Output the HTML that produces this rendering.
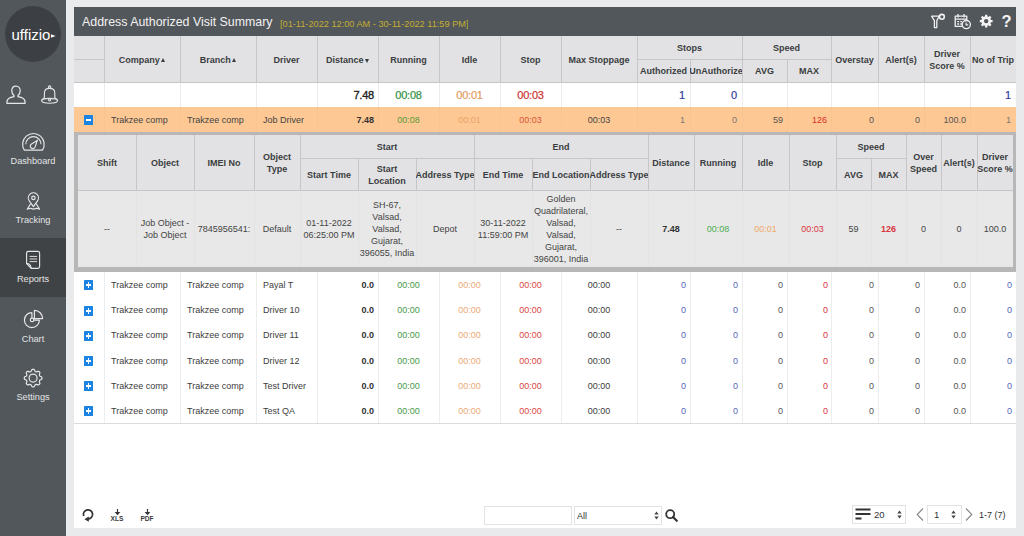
<!DOCTYPE html><html><head><meta charset="utf-8"><style>
html,body{margin:0;padding:0;}
body{width:1024px;height:536px;overflow:hidden;position:relative;background:#e9eaeb;font-family:"Liberation Sans", sans-serif;}
.c{position:absolute;display:flex;align-items:center;box-sizing:border-box;white-space:nowrap;overflow:hidden;}
.hd{font-weight:bold;font-size:9px;color:#3a3d40;}
.td{font-size:9px;color:#3f3f3f;}
svg{position:absolute;}

</style></head><body>
<div style="position:absolute;left:0px;top:0px;width:66px;height:536px;background:#52575c"></div>
<div style="position:absolute;left:0px;top:238px;width:66px;height:59px;background:#3f4346"></div>
<div style="position:absolute;left:5px;top:6px;width:56px;height:56px;background:#3c4044;border-radius:50%"></div>
<div style="position:absolute;left:11.5px;top:27px;line-height:15px;color:#fff;font-size:15px;white-space:nowrap">uffizio</div>
<svg style="left:50.5px;top:33px" width="5" height="6" viewBox="0 0 5 6"><path d="M0 1.2L4.6 3 0 4.8z" fill="#fff"/></svg>
<svg style="left:5.5px;top:84.5px" width="20" height="20" viewBox="0 0 20 20"><path fill="none" stroke="#e6e6e6" stroke-width="1.25" d="M10 1C7.5 1 5.8 3 5.8 5.7C5.8 7.9 6.8 9.6 8 10.6V11.7C4.6 12.3 1.2 13.6 1 16.4V18.3H19V16.4C18.8 13.6 15.4 12.3 12 11.7V10.6C13.2 9.6 14.2 7.9 14.2 5.7C14.2 3 12.5 1 10 1Z"/></svg>
<svg style="left:38px;top:82px" width="24" height="24" viewBox="38 82 24 24"><g fill="none" stroke="#e2e2e2" stroke-width="1.15"><circle cx="49.6" cy="87" r="1.2"/><path d="M44.4 97.6V93C44.4 90.2 46.6 88.3 49.6 88.3S54.8 90.2 54.8 93V97.6C55.2 98.4 56.6 99 57.4 100.2M44.4 97.6C44 98.4 42.6 99 41.8 100.2"/><ellipse cx="49.6" cy="100.8" rx="8" ry="2.4"/><circle cx="49.6" cy="99.8" r="1.1"/></g></svg>
<svg style="left:18px;top:128px" width="30" height="26" viewBox="18 128 30 26"><g fill="none" stroke="#e6e6e6" stroke-width="1.2"><path d="M24.35 150.2A10.8 10.8 0 1 1 42.45 150.2Z"/><path d="M25.8 144.3A7.6 7.6 0 0 1 41 144.3"/><path d="M37.2 140.6L31.53 143.95A2.5 2.5 0 1 0 35.18 146.87Z"/></g></svg>
<div class="c" style="left:0;top:155px;width:66px;height:12px;justify-content:center;color:#e4e4e4;font-size:9.2px;">Dashboard</div>
<svg style="left:22px;top:188px" width="24" height="26" viewBox="22 188 24 26"><g fill="none" stroke="#e6e6e6" stroke-width="1.2" stroke-linejoin="round"><path d="M33.4 206.6L37.53 200.89A5.1 5.1 0 1 0 29.27 200.89Z"/><circle cx="33.4" cy="197.9" r="1.7"/><path d="M30.6 203.8L27.2 209.2Q30.3 207.6 33.4 209.2Q36.5 207.6 39.6 209.2L36.2 203.8"/></g></svg>
<div class="c" style="left:0;top:214px;width:66px;height:12px;justify-content:center;color:#e4e4e4;font-size:9.2px;">Tracking</div>
<svg style="left:20px;top:246px" width="26" height="26" viewBox="20 246 26 26"><g fill="none" stroke="#e6e6e6" stroke-width="1.15" stroke-linejoin="round"><path d="M28.3 251.4H37.8Q39.6 251.4 39.6 253.2V266.5Q39.6 268.3 37.8 268.3H31.2L26.6 263.7V253.2Q26.6 251.4 28.3 251.4Z"/><path d="M26.6 263.7Q28.2 263.4 29.4 264.2Q30.8 265.3 31.2 268.3"/><path d="M29.6 256.4H37.1M29.6 259H37.1M29.6 261.6H37.1" stroke-width="0.95"/></g></svg>
<div class="c" style="left:0;top:273px;width:66px;height:12px;justify-content:center;color:#e4e4e4;font-size:9.2px;">Reports</div>
<svg style="left:20px;top:306px" width="28" height="26" viewBox="20 306 28 26"><g fill="none" stroke="#e6e6e6" stroke-width="1.2" stroke-linejoin="round"><path d="M31.9 312.6A7.5 7.5 0 1 0 39.4 320.1H33.9M31.9 312.6V318.1"/><circle cx="32.1" cy="319.9" r="1.8"/><path d="M34.4 310.3V318.6H42.6A8.3 8.3 0 0 0 34.4 310.3Z"/></g></svg>
<div class="c" style="left:0;top:333px;width:66px;height:12px;justify-content:center;color:#e4e4e4;font-size:9.2px;">Chart</div>
<svg style="left:20px;top:364px" width="26" height="26" viewBox="20 364 26 26"><g fill="none" stroke="#e6e6e6" stroke-width="1.2" stroke-linejoin="round"><path d="M41.95 378.10L41.91 378.56L41.77 379.01L41.37 379.41L40.66 379.71L40.07 379.97L39.77 380.27L39.59 380.59L39.45 380.93L39.35 381.28L39.35 381.71L39.58 382.31L39.87 383.02L39.87 383.58L39.66 384.01L39.36 384.36L39.01 384.66L38.58 384.87L38.02 384.87L37.31 384.58L36.71 384.35L36.28 384.35L35.93 384.45L35.59 384.59L35.27 384.77L34.97 385.07L34.71 385.66L34.41 386.37L34.01 386.77L33.56 386.91L33.10 386.95L32.64 386.91L32.19 386.77L31.79 386.37L31.49 385.66L31.23 385.07L30.93 384.77L30.61 384.59L30.27 384.45L29.92 384.35L29.49 384.35L28.89 384.58L28.18 384.87L27.62 384.87L27.19 384.66L26.84 384.36L26.54 384.01L26.33 383.58L26.33 383.02L26.62 382.31L26.85 381.71L26.85 381.28L26.75 380.93L26.61 380.59L26.43 380.27L26.13 379.97L25.54 379.71L24.83 379.41L24.43 379.01L24.29 378.56L24.25 378.10L24.29 377.64L24.43 377.19L24.83 376.79L25.54 376.49L26.13 376.23L26.43 375.93L26.61 375.61L26.75 375.27L26.85 374.92L26.85 374.49L26.62 373.89L26.33 373.18L26.33 372.62L26.54 372.19L26.84 371.84L27.19 371.54L27.62 371.33L28.18 371.33L28.89 371.62L29.49 371.85L29.92 371.85L30.27 371.75L30.61 371.61L30.93 371.43L31.23 371.13L31.49 370.54L31.79 369.83L32.19 369.43L32.64 369.29L33.10 369.25L33.56 369.29L34.01 369.43L34.41 369.83L34.71 370.54L34.97 371.13L35.27 371.43L35.59 371.61L35.93 371.75L36.28 371.85L36.71 371.85L37.31 371.62L38.02 371.33L38.58 371.33L39.01 371.54L39.36 371.84L39.66 372.19L39.87 372.62L39.87 373.18L39.58 373.89L39.35 374.49L39.35 374.92L39.45 375.27L39.59 375.61L39.77 375.93L40.07 376.23L40.66 376.49L41.37 376.79L41.77 377.19L41.91 377.64Z"/><circle cx="33.1" cy="378.1" r="4"/></g></svg>
<div class="c" style="left:0;top:391px;width:66px;height:12px;justify-content:center;color:#e4e4e4;font-size:9.2px;">Settings</div>
<div style="position:absolute;left:74px;top:7px;width:942px;height:521px;background:#fff"></div>
<div style="position:absolute;left:74px;top:7px;width:942px;height:29px;background:#52575c"></div>
<div class="c" style="left:82px;top:11px;height:22px;color:#f2f2f2;font-size:12.4px;">Address Authorized Visit Summary</div>
<div class="c" style="left:280px;top:13px;height:22px;color:#c3ae32;font-size:9.2px;">[01-11-2022 12:00 AM - 30-11-2022 11:59 PM]</div>
<svg style="left:920px;top:7px" width="96" height="29" viewBox="920 7 96 29"><g fill="none" stroke="#f0f0f0" stroke-width="1.3" stroke-linejoin="round"><path d="M931.6 16.2H939.2L936.8 20.6V27.6H934.4V20.6Z"/><circle cx="941.9" cy="16.8" r="2.4" stroke-width="1.6"/><rect x="955.2" y="16.2" width="11.6" height="10.2"/><path d="M958 14v3.5M964 14v3.5M955.2 19.2h11.6"/><path d="M957.3 21.6h1.8M960.3 21.6h1.8M957.3 24h1.8M960.3 24h1.8" stroke-width="1.4"/><circle cx="966.3" cy="24.6" r="4.1" fill="#52575c"/><path d="M966.1 22.4v2.5h2.1" stroke-width="1.1"/></g><path fill="#f4f4f4" fill-rule="evenodd" transform="translate(979.7 14.6)" d="M11.26 5.34 L12.90 5.36 L12.90 7.64 L11.26 7.66 L10.69 9.04 L11.83 10.22 L10.22 11.83 L9.04 10.69 L7.66 11.26 L7.64 12.90 L5.36 12.90 L5.34 11.26 L3.96 10.69 L2.78 11.83 L1.17 10.22 L2.31 9.04 L1.74 7.66 L0.10 7.64 L0.10 5.36 L1.74 5.34 L2.31 3.96 L1.17 2.78 L2.78 1.17 L3.96 2.31 L5.34 1.74 L5.36 0.10 L7.64 0.10 L7.66 1.74 L9.04 2.31 L10.22 1.17 L11.83 2.78 L10.69 3.96Z M8.7 6.5 A2.2 2.2 0 1 0 4.3 6.5 A2.2 2.2 0 1 0 8.7 6.5Z"/></svg>
<div style="position:absolute;left:1001.5px;top:12.5px;line-height:17px;color:#f4f4f4;font-size:16.5px;font-weight:bold;">?</div>
<div style="position:absolute;left:74px;top:36px;width:942px;height:46px;background:#e2e2e4"></div>
<div style="position:absolute;left:104px;top:36px;width:1px;height:46px;background:#c6c6c8"></div>
<div style="position:absolute;left:180px;top:36px;width:1px;height:46px;background:#c6c6c8"></div>
<div style="position:absolute;left:256px;top:36px;width:1px;height:46px;background:#c6c6c8"></div>
<div style="position:absolute;left:317px;top:36px;width:1px;height:46px;background:#c6c6c8"></div>
<div style="position:absolute;left:378px;top:36px;width:1px;height:46px;background:#c6c6c8"></div>
<div style="position:absolute;left:439px;top:36px;width:1px;height:46px;background:#c6c6c8"></div>
<div style="position:absolute;left:500px;top:36px;width:1px;height:46px;background:#c6c6c8"></div>
<div style="position:absolute;left:561px;top:36px;width:1px;height:46px;background:#c6c6c8"></div>
<div style="position:absolute;left:637px;top:36px;width:1px;height:46px;background:#c6c6c8"></div>
<div style="position:absolute;left:690px;top:59px;width:1px;height:23px;background:#c6c6c8"></div>
<div style="position:absolute;left:742px;top:36px;width:1px;height:46px;background:#c6c6c8"></div>
<div style="position:absolute;left:787px;top:59px;width:1px;height:23px;background:#c6c6c8"></div>
<div style="position:absolute;left:831px;top:36px;width:1px;height:46px;background:#c6c6c8"></div>
<div style="position:absolute;left:878px;top:36px;width:1px;height:46px;background:#c6c6c8"></div>
<div style="position:absolute;left:924px;top:36px;width:1px;height:46px;background:#c6c6c8"></div>
<div style="position:absolute;left:970px;top:36px;width:1px;height:46px;background:#c6c6c8"></div>
<div style="position:absolute;left:74px;top:59px;width:30px;height:1px;background:#c6c6c8"></div>
<div style="position:absolute;left:637px;top:59px;width:194px;height:1px;background:#c6c6c8"></div>
<div style="position:absolute;left:74px;top:82px;width:942px;height:1px;background:#c6c6c8"></div>
<div class="c hd" style="left:104px;top:37px;width:76px;height:46px;justify-content:center;text-align:center;line-height:12px">Company<span style="display:inline-block;width:0;height:0;border-left:2.7px solid transparent;border-right:2.7px solid transparent;border-bottom:4px solid #3a3d40;margin-left:1.5px;margin-bottom:1px"></span></div>
<div class="c hd" style="left:180px;top:37px;width:76px;height:46px;justify-content:center;text-align:center;line-height:12px">Branch<span style="display:inline-block;width:0;height:0;border-left:2.7px solid transparent;border-right:2.7px solid transparent;border-bottom:4px solid #3a3d40;margin-left:1.5px;margin-bottom:1px"></span></div>
<div class="c hd" style="left:256px;top:37px;width:61px;height:46px;justify-content:center;text-align:center;line-height:12px">Driver</div>
<div class="c hd" style="left:317px;top:37px;width:61px;height:46px;justify-content:center;text-align:center;line-height:12px">Distance<span style="display:inline-block;width:0;height:0;border-left:2.7px solid transparent;border-right:2.7px solid transparent;border-top:4px solid #3a3d40;margin-left:1.5px;margin-top:1px"></span></div>
<div class="c hd" style="left:378px;top:37px;width:61px;height:46px;justify-content:center;text-align:center;line-height:12px">Running</div>
<div class="c hd" style="left:439px;top:37px;width:61px;height:46px;justify-content:center;text-align:center;line-height:12px">Idle</div>
<div class="c hd" style="left:500px;top:37px;width:61px;height:46px;justify-content:center;text-align:center;line-height:12px">Stop</div>
<div class="c hd" style="left:561px;top:37px;width:76px;height:46px;justify-content:center;text-align:center;line-height:12px">Max Stoppage</div>
<div class="c hd" style="left:831px;top:37px;width:47px;height:46px;justify-content:center;text-align:center;line-height:12px">Overstay</div>
<div class="c hd" style="left:878px;top:37px;width:46px;height:46px;justify-content:center;text-align:center;line-height:12px">Alert(s)</div>
<div class="c hd" style="left:924px;top:37px;width:46px;height:46px;justify-content:center;text-align:center;line-height:12px">Driver<br>Score %</div>
<div class="c hd" style="left:970px;top:37px;width:46px;height:46px;justify-content:center;text-align:center;line-height:12px">No of Trip</div>
<div class="c hd" style="left:637px;top:36px;width:105px;height:23px;justify-content:center">Stops</div>
<div class="c hd" style="left:742px;top:36px;width:89px;height:23px;justify-content:center">Speed</div>
<div class="c hd" style="left:637px;top:60px;width:53px;height:22px;justify-content:center">Authorized</div>
<div class="c hd" style="left:690px;top:60px;width:52px;height:22px;justify-content:center">UnAuthorize</div>
<div class="c hd" style="left:742px;top:60px;width:45px;height:22px;justify-content:center">AVG</div>
<div class="c hd" style="left:787px;top:60px;width:44px;height:22px;justify-content:center">MAX</div>
<div style="position:absolute;left:104px;top:83px;width:1px;height:24px;background:#ececec"></div>
<div style="position:absolute;left:180px;top:83px;width:1px;height:24px;background:#ececec"></div>
<div style="position:absolute;left:256px;top:83px;width:1px;height:24px;background:#ececec"></div>
<div style="position:absolute;left:317px;top:83px;width:1px;height:24px;background:#ececec"></div>
<div style="position:absolute;left:378px;top:83px;width:1px;height:24px;background:#ececec"></div>
<div style="position:absolute;left:439px;top:83px;width:1px;height:24px;background:#ececec"></div>
<div style="position:absolute;left:500px;top:83px;width:1px;height:24px;background:#ececec"></div>
<div style="position:absolute;left:561px;top:83px;width:1px;height:24px;background:#ececec"></div>
<div style="position:absolute;left:637px;top:83px;width:1px;height:24px;background:#ececec"></div>
<div style="position:absolute;left:690px;top:83px;width:1px;height:24px;background:#ececec"></div>
<div style="position:absolute;left:742px;top:83px;width:1px;height:24px;background:#ececec"></div>
<div style="position:absolute;left:787px;top:83px;width:1px;height:24px;background:#ececec"></div>
<div style="position:absolute;left:831px;top:83px;width:1px;height:24px;background:#ececec"></div>
<div style="position:absolute;left:878px;top:83px;width:1px;height:24px;background:#ececec"></div>
<div style="position:absolute;left:924px;top:83px;width:1px;height:24px;background:#ececec"></div>
<div style="position:absolute;left:970px;top:83px;width:1px;height:24px;background:#ececec"></div>
<div class="c" style="left:317px;top:83px;width:61px;height:24px;justify-content:flex-end;text-align:right;padding:0 4px;font-size:11px;letter-spacing:-0.2px;color:#1e1e1e;-webkit-text-stroke:0.35px #1e1e1e;">7.48</div>
<div class="c" style="left:378px;top:83px;width:61px;height:24px;justify-content:center;text-align:center;padding:0 4px;font-size:11px;letter-spacing:-0.2px;color:#2f8f3f;-webkit-text-stroke:0.2px #2f8f3f;">00:08</div>
<div class="c" style="left:439px;top:83px;width:61px;height:24px;justify-content:center;text-align:center;padding:0 4px;font-size:11px;letter-spacing:-0.2px;color:#e09a5e;-webkit-text-stroke:0.2px #e09a5e;">00:01</div>
<div class="c" style="left:500px;top:83px;width:61px;height:24px;justify-content:center;text-align:center;padding:0 4px;font-size:11px;letter-spacing:-0.2px;color:#cc3030;-webkit-text-stroke:0.2px #cc3030;">00:03</div>
<div class="c" style="left:637px;top:83px;width:53px;height:24px;justify-content:flex-end;text-align:right;padding:0 5px;font-size:11px;letter-spacing:-0.2px;color:#33409a;-webkit-text-stroke:0.2px #33409a;">1</div>
<div class="c" style="left:690px;top:83px;width:52px;height:24px;justify-content:flex-end;text-align:right;padding:0 5px;font-size:11px;letter-spacing:-0.2px;color:#33409a;-webkit-text-stroke:0.2px #33409a;">0</div>
<div class="c" style="left:970px;top:83px;width:46px;height:24px;justify-content:flex-end;text-align:right;padding:0 5px;font-size:11px;letter-spacing:-0.2px;color:#33409a;-webkit-text-stroke:0.2px #33409a;">1</div>
<div style="position:absolute;left:74px;top:107px;width:942px;height:25px;background:#fdc894"></div>
<div style="position:absolute;left:104px;top:107px;width:1px;height:25px;background:#f8c490"></div>
<div style="position:absolute;left:180px;top:107px;width:1px;height:25px;background:#f8c490"></div>
<div style="position:absolute;left:256px;top:107px;width:1px;height:25px;background:#f8c490"></div>
<div style="position:absolute;left:317px;top:107px;width:1px;height:25px;background:#f8c490"></div>
<div style="position:absolute;left:378px;top:107px;width:1px;height:25px;background:#f8c490"></div>
<div style="position:absolute;left:439px;top:107px;width:1px;height:25px;background:#f8c490"></div>
<div style="position:absolute;left:500px;top:107px;width:1px;height:25px;background:#f8c490"></div>
<div style="position:absolute;left:561px;top:107px;width:1px;height:25px;background:#f8c490"></div>
<div style="position:absolute;left:637px;top:107px;width:1px;height:25px;background:#f8c490"></div>
<div style="position:absolute;left:690px;top:107px;width:1px;height:25px;background:#f8c490"></div>
<div style="position:absolute;left:742px;top:107px;width:1px;height:25px;background:#f8c490"></div>
<div style="position:absolute;left:787px;top:107px;width:1px;height:25px;background:#f8c490"></div>
<div style="position:absolute;left:831px;top:107px;width:1px;height:25px;background:#f8c490"></div>
<div style="position:absolute;left:878px;top:107px;width:1px;height:25px;background:#f8c490"></div>
<div style="position:absolute;left:924px;top:107px;width:1px;height:25px;background:#f8c490"></div>
<div style="position:absolute;left:970px;top:107px;width:1px;height:25px;background:#f8c490"></div>
<div style="position:absolute;left:84px;top:115px;width:9px;height:9.5px;background:#1b84e3;border-radius:0.5px"><div style="position:absolute;left:1.6px;top:3.8px;width:5.8px;height:1.9px;background:#fff"></div></div>
<div class="c" style="left:104px;top:107px;width:76px;height:25px;justify-content:flex-start;text-align:left;padding:0 7px;font-size:9px;color:#444;">Trakzee comp</div>
<div class="c" style="left:180px;top:107px;width:76px;height:25px;justify-content:flex-start;text-align:left;padding:0 7px;font-size:9px;color:#444;">Trakzee comp</div>
<div class="c" style="left:256px;top:107px;width:61px;height:25px;justify-content:flex-start;text-align:left;padding:0 7px;font-size:9px;color:#444;">Job Driver</div>
<div class="c" style="left:317px;top:107px;width:61px;height:25px;justify-content:flex-end;text-align:right;padding:0 4px;font-size:9px;color:#333;font-weight:bold;">7.48</div>
<div class="c" style="left:378px;top:107px;width:61px;height:25px;justify-content:center;text-align:center;padding:0 4px;font-size:9px;color:#5d9a3a;">00:08</div>
<div class="c" style="left:439px;top:107px;width:61px;height:25px;justify-content:center;text-align:center;padding:0 4px;font-size:9px;color:#eba36a;">00:01</div>
<div class="c" style="left:500px;top:107px;width:61px;height:25px;justify-content:center;text-align:center;padding:0 4px;font-size:9px;color:#d9533a;">00:03</div>
<div class="c" style="left:561px;top:107px;width:76px;height:25px;justify-content:center;text-align:center;padding:0 4px;font-size:9px;color:#444;">00:03</div>
<div class="c" style="left:637px;top:107px;width:53px;height:25px;justify-content:flex-end;text-align:right;padding:0 5px;font-size:9px;color:#777;">1</div>
<div class="c" style="left:690px;top:107px;width:52px;height:25px;justify-content:flex-end;text-align:right;padding:0 5px;font-size:9px;color:#777;">0</div>
<div class="c" style="left:742px;top:107px;width:45px;height:25px;justify-content:flex-end;text-align:right;padding:0 4px;font-size:9px;color:#555;">59</div>
<div class="c" style="left:787px;top:107px;width:44px;height:25px;justify-content:flex-end;text-align:right;padding:0 4px;font-size:9px;color:#e0302a;">126</div>
<div class="c" style="left:831px;top:107px;width:47px;height:25px;justify-content:flex-end;text-align:right;padding:0 4px;font-size:9px;color:#555;">0</div>
<div class="c" style="left:878px;top:107px;width:46px;height:25px;justify-content:flex-end;text-align:right;padding:0 4px;font-size:9px;color:#555;">0</div>
<div class="c" style="left:924px;top:107px;width:46px;height:25px;justify-content:flex-end;text-align:right;padding:0 4px;font-size:9px;color:#555;">100.0</div>
<div class="c" style="left:970px;top:107px;width:46px;height:25px;justify-content:flex-end;text-align:right;padding:0 5px;font-size:9px;color:#777;">1</div>
<div style="position:absolute;left:74px;top:132px;width:942px;height:140px;background:#b6b7b6"></div>
<div style="position:absolute;left:78px;top:135px;width:935px;height:55px;background:#e2e2e4"></div>
<div style="position:absolute;left:78px;top:190px;width:935px;height:77px;background:#e8e8e8"></div>
<div style="position:absolute;left:136px;top:135px;width:1px;height:55px;background:#c6c6c8"></div>
<div style="position:absolute;left:136px;top:190px;width:1px;height:77px;background:#e3e3e3"></div>
<div style="position:absolute;left:194px;top:135px;width:1px;height:55px;background:#c6c6c8"></div>
<div style="position:absolute;left:194px;top:190px;width:1px;height:77px;background:#e3e3e3"></div>
<div style="position:absolute;left:254px;top:135px;width:1px;height:55px;background:#c6c6c8"></div>
<div style="position:absolute;left:254px;top:190px;width:1px;height:77px;background:#e3e3e3"></div>
<div style="position:absolute;left:300px;top:135px;width:1px;height:55px;background:#c6c6c8"></div>
<div style="position:absolute;left:300px;top:190px;width:1px;height:77px;background:#e3e3e3"></div>
<div style="position:absolute;left:358px;top:158px;width:1px;height:32px;background:#c6c6c8"></div>
<div style="position:absolute;left:358px;top:190px;width:1px;height:77px;background:#e3e3e3"></div>
<div style="position:absolute;left:416px;top:158px;width:1px;height:32px;background:#c6c6c8"></div>
<div style="position:absolute;left:416px;top:190px;width:1px;height:77px;background:#e3e3e3"></div>
<div style="position:absolute;left:474px;top:135px;width:1px;height:55px;background:#c6c6c8"></div>
<div style="position:absolute;left:474px;top:190px;width:1px;height:77px;background:#e3e3e3"></div>
<div style="position:absolute;left:532px;top:158px;width:1px;height:32px;background:#c6c6c8"></div>
<div style="position:absolute;left:532px;top:190px;width:1px;height:77px;background:#e3e3e3"></div>
<div style="position:absolute;left:590px;top:158px;width:1px;height:32px;background:#c6c6c8"></div>
<div style="position:absolute;left:590px;top:190px;width:1px;height:77px;background:#e3e3e3"></div>
<div style="position:absolute;left:648px;top:135px;width:1px;height:55px;background:#c6c6c8"></div>
<div style="position:absolute;left:648px;top:190px;width:1px;height:77px;background:#e3e3e3"></div>
<div style="position:absolute;left:694px;top:135px;width:1px;height:55px;background:#c6c6c8"></div>
<div style="position:absolute;left:694px;top:190px;width:1px;height:77px;background:#e3e3e3"></div>
<div style="position:absolute;left:742px;top:135px;width:1px;height:55px;background:#c6c6c8"></div>
<div style="position:absolute;left:742px;top:190px;width:1px;height:77px;background:#e3e3e3"></div>
<div style="position:absolute;left:789px;top:135px;width:1px;height:55px;background:#c6c6c8"></div>
<div style="position:absolute;left:789px;top:190px;width:1px;height:77px;background:#e3e3e3"></div>
<div style="position:absolute;left:836px;top:135px;width:1px;height:55px;background:#c6c6c8"></div>
<div style="position:absolute;left:836px;top:190px;width:1px;height:77px;background:#e3e3e3"></div>
<div style="position:absolute;left:871px;top:158px;width:1px;height:32px;background:#c6c6c8"></div>
<div style="position:absolute;left:871px;top:190px;width:1px;height:77px;background:#e3e3e3"></div>
<div style="position:absolute;left:906px;top:135px;width:1px;height:55px;background:#c6c6c8"></div>
<div style="position:absolute;left:906px;top:190px;width:1px;height:77px;background:#e3e3e3"></div>
<div style="position:absolute;left:941px;top:135px;width:1px;height:55px;background:#c6c6c8"></div>
<div style="position:absolute;left:941px;top:190px;width:1px;height:77px;background:#e3e3e3"></div>
<div style="position:absolute;left:977px;top:135px;width:1px;height:55px;background:#c6c6c8"></div>
<div style="position:absolute;left:977px;top:190px;width:1px;height:77px;background:#e3e3e3"></div>
<div style="position:absolute;left:300px;top:158px;width:348px;height:1px;background:#c6c6c8"></div>
<div style="position:absolute;left:836px;top:158px;width:70px;height:1px;background:#c6c6c8"></div>
<div style="position:absolute;left:78px;top:190px;width:935px;height:1px;background:#c6c6c8"></div>
<div class="c hd" style="left:78px;top:135px;width:58px;height:55px;justify-content:center;text-align:center;line-height:12px">Shift</div>
<div class="c hd" style="left:136px;top:135px;width:58px;height:55px;justify-content:center;text-align:center;line-height:12px">Object</div>
<div class="c hd" style="left:194px;top:135px;width:60px;height:55px;justify-content:center;text-align:center;line-height:12px">IMEI No</div>
<div class="c hd" style="left:254px;top:135px;width:46px;height:55px;justify-content:center;text-align:center;line-height:12px">Object<br>Type</div>
<div class="c hd" style="left:648px;top:135px;width:46px;height:55px;justify-content:center;text-align:center;line-height:12px">Distance</div>
<div class="c hd" style="left:694px;top:135px;width:48px;height:55px;justify-content:center;text-align:center;line-height:12px">Running</div>
<div class="c hd" style="left:742px;top:135px;width:47px;height:55px;justify-content:center;text-align:center;line-height:12px">Idle</div>
<div class="c hd" style="left:789px;top:135px;width:47px;height:55px;justify-content:center;text-align:center;line-height:12px">Stop</div>
<div class="c hd" style="left:906px;top:135px;width:35px;height:55px;justify-content:center;text-align:center;line-height:12px">Over<br>Speed</div>
<div class="c hd" style="left:941px;top:135px;width:36px;height:55px;justify-content:center;text-align:center;line-height:12px">Alert(s)</div>
<div class="c hd" style="left:977px;top:135px;width:36px;height:55px;justify-content:center;text-align:center;line-height:12px">Driver<br>Score %</div>
<div class="c hd" style="left:300px;top:135px;width:174px;height:23px;justify-content:center">Start</div>
<div class="c hd" style="left:474px;top:135px;width:174px;height:23px;justify-content:center">End</div>
<div class="c hd" style="left:836px;top:135px;width:70px;height:23px;justify-content:center">Speed</div>
<div class="c hd" style="left:300px;top:159px;width:58px;height:31px;justify-content:center;text-align:center;line-height:12px">Start Time</div>
<div class="c hd" style="left:358px;top:159px;width:58px;height:31px;justify-content:center;text-align:center;line-height:12px">Start<br>Location</div>
<div class="c hd" style="left:416px;top:159px;width:58px;height:31px;justify-content:center;text-align:center;line-height:12px">Address Type</div>
<div class="c hd" style="left:474px;top:159px;width:58px;height:31px;justify-content:center;text-align:center;line-height:12px">End Time</div>
<div class="c hd" style="left:532px;top:159px;width:58px;height:31px;justify-content:center;text-align:center;line-height:12px">End Location</div>
<div class="c hd" style="left:590px;top:159px;width:58px;height:31px;justify-content:center;text-align:center;line-height:12px">Address Type</div>
<div class="c hd" style="left:836px;top:159px;width:35px;height:31px;justify-content:center;text-align:center;line-height:12px">AVG</div>
<div class="c hd" style="left:871px;top:159px;width:35px;height:31px;justify-content:center;text-align:center;line-height:12px">MAX</div>
<div class="c td" style="left:78px;top:190px;width:58px;height:77px;justify-content:center;text-align:center;line-height:12px;color:#444;">--</div>
<div class="c td" style="left:136px;top:190px;width:58px;height:77px;justify-content:center;text-align:center;line-height:12px;color:#444;">Job Object -<br>Job Object</div>
<div class="c td" style="left:194px;top:190px;width:60px;height:77px;justify-content:center;text-align:center;line-height:12px;color:#444;">7845956541:</div>
<div class="c td" style="left:254px;top:190px;width:46px;height:77px;justify-content:center;text-align:center;line-height:12px;color:#444;">Default</div>
<div class="c td" style="left:300px;top:190px;width:58px;height:77px;justify-content:center;text-align:center;line-height:12px;color:#444;">01-11-2022<br>06:25:00 PM</div>
<div class="c td" style="left:358px;top:190px;width:58px;height:77px;justify-content:center;text-align:center;line-height:12px;color:#444;">SH-67,<br>Valsad,<br>Valsad,<br>Gujarat,<br>396055, India</div>
<div class="c td" style="left:416px;top:190px;width:58px;height:77px;justify-content:center;text-align:center;line-height:12px;color:#444;">Depot</div>
<div class="c td" style="left:474px;top:190px;width:58px;height:77px;justify-content:center;text-align:center;line-height:12px;color:#444;">30-11-2022<br>11:59:00 PM</div>
<div class="c td" style="left:532px;top:190px;width:58px;height:77px;justify-content:center;text-align:center;line-height:12px;color:#444;">Golden<br>Quadrilateral,<br>Valsad,<br>Valsad,<br>Gujarat,<br>396001, India</div>
<div class="c td" style="left:590px;top:190px;width:58px;height:77px;justify-content:center;text-align:center;line-height:12px;color:#444;">--</div>
<div class="c td" style="left:648px;top:190px;width:46px;height:77px;justify-content:center;text-align:center;line-height:12px;color:#333;font-weight:bold;">7.48</div>
<div class="c td" style="left:694px;top:190px;width:48px;height:77px;justify-content:center;text-align:center;line-height:12px;color:#4caf50;">00:08</div>
<div class="c td" style="left:742px;top:190px;width:47px;height:77px;justify-content:center;text-align:center;line-height:12px;color:#f0a868;">00:01</div>
<div class="c td" style="left:789px;top:190px;width:47px;height:77px;justify-content:center;text-align:center;line-height:12px;color:#d9363e;">00:03</div>
<div class="c td" style="left:836px;top:190px;width:35px;height:77px;justify-content:center;text-align:center;line-height:12px;color:#444;">59</div>
<div class="c td" style="left:871px;top:190px;width:35px;height:77px;justify-content:center;text-align:center;line-height:12px;color:#d9363e;font-weight:bold;">126</div>
<div class="c td" style="left:906px;top:190px;width:35px;height:77px;justify-content:center;text-align:center;line-height:12px;color:#444;">0</div>
<div class="c td" style="left:941px;top:190px;width:36px;height:77px;justify-content:center;text-align:center;line-height:12px;color:#444;">0</div>
<div class="c td" style="left:977px;top:190px;width:36px;height:77px;justify-content:center;text-align:center;line-height:12px;color:#444;">100.0</div>
<div style="position:absolute;left:104px;top:272px;width:1px;height:151px;background:#ededed"></div>
<div style="position:absolute;left:180px;top:272px;width:1px;height:151px;background:#ededed"></div>
<div style="position:absolute;left:256px;top:272px;width:1px;height:151px;background:#ededed"></div>
<div style="position:absolute;left:317px;top:272px;width:1px;height:151px;background:#ededed"></div>
<div style="position:absolute;left:378px;top:272px;width:1px;height:151px;background:#ededed"></div>
<div style="position:absolute;left:439px;top:272px;width:1px;height:151px;background:#ededed"></div>
<div style="position:absolute;left:500px;top:272px;width:1px;height:151px;background:#ededed"></div>
<div style="position:absolute;left:561px;top:272px;width:1px;height:151px;background:#ededed"></div>
<div style="position:absolute;left:637px;top:272px;width:1px;height:151px;background:#ededed"></div>
<div style="position:absolute;left:690px;top:272px;width:1px;height:151px;background:#ededed"></div>
<div style="position:absolute;left:742px;top:272px;width:1px;height:151px;background:#ededed"></div>
<div style="position:absolute;left:787px;top:272px;width:1px;height:151px;background:#ededed"></div>
<div style="position:absolute;left:831px;top:272px;width:1px;height:151px;background:#ededed"></div>
<div style="position:absolute;left:878px;top:272px;width:1px;height:151px;background:#ededed"></div>
<div style="position:absolute;left:924px;top:272px;width:1px;height:151px;background:#ededed"></div>
<div style="position:absolute;left:970px;top:272px;width:1px;height:151px;background:#ededed"></div>
<div style="position:absolute;left:74px;top:423px;width:942px;height:1px;background:#dcdcdc"></div>
<div style="position:absolute;left:84px;top:280px;width:9px;height:9.5px;background:#1b84e3;border-radius:0.5px"><div style="position:absolute;left:1.6px;top:3.8px;width:5.8px;height:1.9px;background:#fff"></div><div style="position:absolute;left:3.55px;top:1.8px;width:1.9px;height:5.9px;background:#fff"></div></div>
<div class="c" style="left:104px;top:272.5px;width:76px;height:25.149999999999977px;justify-content:flex-start;text-align:left;padding:0 7px;font-size:9px;color:#3d3d3d;">Trakzee comp</div>
<div class="c" style="left:180px;top:272.5px;width:76px;height:25.149999999999977px;justify-content:flex-start;text-align:left;padding:0 7px;font-size:9px;color:#3d3d3d;">Trakzee comp</div>
<div class="c" style="left:256px;top:272.5px;width:61px;height:25.149999999999977px;justify-content:flex-start;text-align:left;padding:0 7px;font-size:9px;color:#3d3d3d;">Payal T</div>
<div class="c" style="left:317px;top:272.5px;width:61px;height:25.149999999999977px;justify-content:flex-end;text-align:right;padding:0 4px;font-size:9px;color:#333;font-weight:bold;">0.0</div>
<div class="c" style="left:378px;top:272.5px;width:61px;height:25.149999999999977px;justify-content:center;text-align:center;padding:0 4px;font-size:9px;color:#4a9a4a;">00:00</div>
<div class="c" style="left:439px;top:272.5px;width:61px;height:25.149999999999977px;justify-content:center;text-align:center;padding:0 4px;font-size:9px;color:#eeaa77;">00:00</div>
<div class="c" style="left:500px;top:272.5px;width:61px;height:25.149999999999977px;justify-content:center;text-align:center;padding:0 4px;font-size:9px;color:#dd4444;">00:00</div>
<div class="c" style="left:561px;top:272.5px;width:76px;height:25.149999999999977px;justify-content:center;text-align:center;padding:0 4px;font-size:9px;color:#3d3d3d;">00:00</div>
<div class="c" style="left:637px;top:272.5px;width:53px;height:25.149999999999977px;justify-content:flex-end;text-align:right;padding:0 4px;font-size:9px;color:#5566bb;">0</div>
<div class="c" style="left:690px;top:272.5px;width:52px;height:25.149999999999977px;justify-content:flex-end;text-align:right;padding:0 4px;font-size:9px;color:#5566bb;">0</div>
<div class="c" style="left:742px;top:272.5px;width:45px;height:25.149999999999977px;justify-content:flex-end;text-align:right;padding:0 4px;font-size:9px;color:#555;">0</div>
<div class="c" style="left:787px;top:272.5px;width:44px;height:25.149999999999977px;justify-content:flex-end;text-align:right;padding:0 3px;font-size:9px;color:#dd3344;">0</div>
<div class="c" style="left:831px;top:272.5px;width:47px;height:25.149999999999977px;justify-content:flex-end;text-align:right;padding:0 4px;font-size:9px;color:#555;">0</div>
<div class="c" style="left:878px;top:272.5px;width:46px;height:25.149999999999977px;justify-content:flex-end;text-align:right;padding:0 4px;font-size:9px;color:#555;">0</div>
<div class="c" style="left:924px;top:272.5px;width:46px;height:25.149999999999977px;justify-content:flex-end;text-align:right;padding:0 4px;font-size:9px;color:#555;">0.0</div>
<div class="c" style="left:970px;top:272.5px;width:46px;height:25.149999999999977px;justify-content:flex-end;text-align:right;padding:0 4px;font-size:9px;color:#5566bb;">0</div>
<div style="position:absolute;left:84px;top:306px;width:9px;height:9.5px;background:#1b84e3;border-radius:0.5px"><div style="position:absolute;left:1.6px;top:3.8px;width:5.8px;height:1.9px;background:#fff"></div><div style="position:absolute;left:3.55px;top:1.8px;width:1.9px;height:5.9px;background:#fff"></div></div>
<div class="c" style="left:104px;top:297.65px;width:76px;height:25.150000000000034px;justify-content:flex-start;text-align:left;padding:0 7px;font-size:9px;color:#3d3d3d;">Trakzee comp</div>
<div class="c" style="left:180px;top:297.65px;width:76px;height:25.150000000000034px;justify-content:flex-start;text-align:left;padding:0 7px;font-size:9px;color:#3d3d3d;">Trakzee comp</div>
<div class="c" style="left:256px;top:297.65px;width:61px;height:25.150000000000034px;justify-content:flex-start;text-align:left;padding:0 7px;font-size:9px;color:#3d3d3d;">Driver 10</div>
<div class="c" style="left:317px;top:297.65px;width:61px;height:25.150000000000034px;justify-content:flex-end;text-align:right;padding:0 4px;font-size:9px;color:#333;font-weight:bold;">0.0</div>
<div class="c" style="left:378px;top:297.65px;width:61px;height:25.150000000000034px;justify-content:center;text-align:center;padding:0 4px;font-size:9px;color:#4a9a4a;">00:00</div>
<div class="c" style="left:439px;top:297.65px;width:61px;height:25.150000000000034px;justify-content:center;text-align:center;padding:0 4px;font-size:9px;color:#eeaa77;">00:00</div>
<div class="c" style="left:500px;top:297.65px;width:61px;height:25.150000000000034px;justify-content:center;text-align:center;padding:0 4px;font-size:9px;color:#dd4444;">00:00</div>
<div class="c" style="left:561px;top:297.65px;width:76px;height:25.150000000000034px;justify-content:center;text-align:center;padding:0 4px;font-size:9px;color:#3d3d3d;">00:00</div>
<div class="c" style="left:637px;top:297.65px;width:53px;height:25.150000000000034px;justify-content:flex-end;text-align:right;padding:0 4px;font-size:9px;color:#5566bb;">0</div>
<div class="c" style="left:690px;top:297.65px;width:52px;height:25.150000000000034px;justify-content:flex-end;text-align:right;padding:0 4px;font-size:9px;color:#5566bb;">0</div>
<div class="c" style="left:742px;top:297.65px;width:45px;height:25.150000000000034px;justify-content:flex-end;text-align:right;padding:0 4px;font-size:9px;color:#555;">0</div>
<div class="c" style="left:787px;top:297.65px;width:44px;height:25.150000000000034px;justify-content:flex-end;text-align:right;padding:0 3px;font-size:9px;color:#dd3344;">0</div>
<div class="c" style="left:831px;top:297.65px;width:47px;height:25.150000000000034px;justify-content:flex-end;text-align:right;padding:0 4px;font-size:9px;color:#555;">0</div>
<div class="c" style="left:878px;top:297.65px;width:46px;height:25.150000000000034px;justify-content:flex-end;text-align:right;padding:0 4px;font-size:9px;color:#555;">0</div>
<div class="c" style="left:924px;top:297.65px;width:46px;height:25.150000000000034px;justify-content:flex-end;text-align:right;padding:0 4px;font-size:9px;color:#555;">0.0</div>
<div class="c" style="left:970px;top:297.65px;width:46px;height:25.150000000000034px;justify-content:flex-end;text-align:right;padding:0 4px;font-size:9px;color:#5566bb;">0</div>
<div style="position:absolute;left:84px;top:331px;width:9px;height:9.5px;background:#1b84e3;border-radius:0.5px"><div style="position:absolute;left:1.6px;top:3.8px;width:5.8px;height:1.9px;background:#fff"></div><div style="position:absolute;left:3.55px;top:1.8px;width:1.9px;height:5.9px;background:#fff"></div></div>
<div class="c" style="left:104px;top:322.8px;width:76px;height:25.149999999999977px;justify-content:flex-start;text-align:left;padding:0 7px;font-size:9px;color:#3d3d3d;">Trakzee comp</div>
<div class="c" style="left:180px;top:322.8px;width:76px;height:25.149999999999977px;justify-content:flex-start;text-align:left;padding:0 7px;font-size:9px;color:#3d3d3d;">Trakzee comp</div>
<div class="c" style="left:256px;top:322.8px;width:61px;height:25.149999999999977px;justify-content:flex-start;text-align:left;padding:0 7px;font-size:9px;color:#3d3d3d;">Driver 11</div>
<div class="c" style="left:317px;top:322.8px;width:61px;height:25.149999999999977px;justify-content:flex-end;text-align:right;padding:0 4px;font-size:9px;color:#333;font-weight:bold;">0.0</div>
<div class="c" style="left:378px;top:322.8px;width:61px;height:25.149999999999977px;justify-content:center;text-align:center;padding:0 4px;font-size:9px;color:#4a9a4a;">00:00</div>
<div class="c" style="left:439px;top:322.8px;width:61px;height:25.149999999999977px;justify-content:center;text-align:center;padding:0 4px;font-size:9px;color:#eeaa77;">00:00</div>
<div class="c" style="left:500px;top:322.8px;width:61px;height:25.149999999999977px;justify-content:center;text-align:center;padding:0 4px;font-size:9px;color:#dd4444;">00:00</div>
<div class="c" style="left:561px;top:322.8px;width:76px;height:25.149999999999977px;justify-content:center;text-align:center;padding:0 4px;font-size:9px;color:#3d3d3d;">00:00</div>
<div class="c" style="left:637px;top:322.8px;width:53px;height:25.149999999999977px;justify-content:flex-end;text-align:right;padding:0 4px;font-size:9px;color:#5566bb;">0</div>
<div class="c" style="left:690px;top:322.8px;width:52px;height:25.149999999999977px;justify-content:flex-end;text-align:right;padding:0 4px;font-size:9px;color:#5566bb;">0</div>
<div class="c" style="left:742px;top:322.8px;width:45px;height:25.149999999999977px;justify-content:flex-end;text-align:right;padding:0 4px;font-size:9px;color:#555;">0</div>
<div class="c" style="left:787px;top:322.8px;width:44px;height:25.149999999999977px;justify-content:flex-end;text-align:right;padding:0 3px;font-size:9px;color:#dd3344;">0</div>
<div class="c" style="left:831px;top:322.8px;width:47px;height:25.149999999999977px;justify-content:flex-end;text-align:right;padding:0 4px;font-size:9px;color:#555;">0</div>
<div class="c" style="left:878px;top:322.8px;width:46px;height:25.149999999999977px;justify-content:flex-end;text-align:right;padding:0 4px;font-size:9px;color:#555;">0</div>
<div class="c" style="left:924px;top:322.8px;width:46px;height:25.149999999999977px;justify-content:flex-end;text-align:right;padding:0 4px;font-size:9px;color:#555;">0.0</div>
<div class="c" style="left:970px;top:322.8px;width:46px;height:25.149999999999977px;justify-content:flex-end;text-align:right;padding:0 4px;font-size:9px;color:#5566bb;">0</div>
<div style="position:absolute;left:84px;top:356px;width:9px;height:9.5px;background:#1b84e3;border-radius:0.5px"><div style="position:absolute;left:1.6px;top:3.8px;width:5.8px;height:1.9px;background:#fff"></div><div style="position:absolute;left:3.55px;top:1.8px;width:1.9px;height:5.9px;background:#fff"></div></div>
<div class="c" style="left:104px;top:347.95px;width:76px;height:25.150000000000034px;justify-content:flex-start;text-align:left;padding:0 7px;font-size:9px;color:#3d3d3d;">Trakzee comp</div>
<div class="c" style="left:180px;top:347.95px;width:76px;height:25.150000000000034px;justify-content:flex-start;text-align:left;padding:0 7px;font-size:9px;color:#3d3d3d;">Trakzee comp</div>
<div class="c" style="left:256px;top:347.95px;width:61px;height:25.150000000000034px;justify-content:flex-start;text-align:left;padding:0 7px;font-size:9px;color:#3d3d3d;">Driver 12</div>
<div class="c" style="left:317px;top:347.95px;width:61px;height:25.150000000000034px;justify-content:flex-end;text-align:right;padding:0 4px;font-size:9px;color:#333;font-weight:bold;">0.0</div>
<div class="c" style="left:378px;top:347.95px;width:61px;height:25.150000000000034px;justify-content:center;text-align:center;padding:0 4px;font-size:9px;color:#4a9a4a;">00:00</div>
<div class="c" style="left:439px;top:347.95px;width:61px;height:25.150000000000034px;justify-content:center;text-align:center;padding:0 4px;font-size:9px;color:#eeaa77;">00:00</div>
<div class="c" style="left:500px;top:347.95px;width:61px;height:25.150000000000034px;justify-content:center;text-align:center;padding:0 4px;font-size:9px;color:#dd4444;">00:00</div>
<div class="c" style="left:561px;top:347.95px;width:76px;height:25.150000000000034px;justify-content:center;text-align:center;padding:0 4px;font-size:9px;color:#3d3d3d;">00:00</div>
<div class="c" style="left:637px;top:347.95px;width:53px;height:25.150000000000034px;justify-content:flex-end;text-align:right;padding:0 4px;font-size:9px;color:#5566bb;">0</div>
<div class="c" style="left:690px;top:347.95px;width:52px;height:25.150000000000034px;justify-content:flex-end;text-align:right;padding:0 4px;font-size:9px;color:#5566bb;">0</div>
<div class="c" style="left:742px;top:347.95px;width:45px;height:25.150000000000034px;justify-content:flex-end;text-align:right;padding:0 4px;font-size:9px;color:#555;">0</div>
<div class="c" style="left:787px;top:347.95px;width:44px;height:25.150000000000034px;justify-content:flex-end;text-align:right;padding:0 3px;font-size:9px;color:#dd3344;">0</div>
<div class="c" style="left:831px;top:347.95px;width:47px;height:25.150000000000034px;justify-content:flex-end;text-align:right;padding:0 4px;font-size:9px;color:#555;">0</div>
<div class="c" style="left:878px;top:347.95px;width:46px;height:25.150000000000034px;justify-content:flex-end;text-align:right;padding:0 4px;font-size:9px;color:#555;">0</div>
<div class="c" style="left:924px;top:347.95px;width:46px;height:25.150000000000034px;justify-content:flex-end;text-align:right;padding:0 4px;font-size:9px;color:#555;">0.0</div>
<div class="c" style="left:970px;top:347.95px;width:46px;height:25.150000000000034px;justify-content:flex-end;text-align:right;padding:0 4px;font-size:9px;color:#5566bb;">0</div>
<div style="position:absolute;left:84px;top:381px;width:9px;height:9.5px;background:#1b84e3;border-radius:0.5px"><div style="position:absolute;left:1.6px;top:3.8px;width:5.8px;height:1.9px;background:#fff"></div><div style="position:absolute;left:3.55px;top:1.8px;width:1.9px;height:5.9px;background:#fff"></div></div>
<div class="c" style="left:104px;top:373.1px;width:76px;height:25.149999999999977px;justify-content:flex-start;text-align:left;padding:0 7px;font-size:9px;color:#3d3d3d;">Trakzee comp</div>
<div class="c" style="left:180px;top:373.1px;width:76px;height:25.149999999999977px;justify-content:flex-start;text-align:left;padding:0 7px;font-size:9px;color:#3d3d3d;">Trakzee comp</div>
<div class="c" style="left:256px;top:373.1px;width:61px;height:25.149999999999977px;justify-content:flex-start;text-align:left;padding:0 7px;font-size:9px;color:#3d3d3d;">Test Driver</div>
<div class="c" style="left:317px;top:373.1px;width:61px;height:25.149999999999977px;justify-content:flex-end;text-align:right;padding:0 4px;font-size:9px;color:#333;font-weight:bold;">0.0</div>
<div class="c" style="left:378px;top:373.1px;width:61px;height:25.149999999999977px;justify-content:center;text-align:center;padding:0 4px;font-size:9px;color:#4a9a4a;">00:00</div>
<div class="c" style="left:439px;top:373.1px;width:61px;height:25.149999999999977px;justify-content:center;text-align:center;padding:0 4px;font-size:9px;color:#eeaa77;">00:00</div>
<div class="c" style="left:500px;top:373.1px;width:61px;height:25.149999999999977px;justify-content:center;text-align:center;padding:0 4px;font-size:9px;color:#dd4444;">00:00</div>
<div class="c" style="left:561px;top:373.1px;width:76px;height:25.149999999999977px;justify-content:center;text-align:center;padding:0 4px;font-size:9px;color:#3d3d3d;">00:00</div>
<div class="c" style="left:637px;top:373.1px;width:53px;height:25.149999999999977px;justify-content:flex-end;text-align:right;padding:0 4px;font-size:9px;color:#5566bb;">0</div>
<div class="c" style="left:690px;top:373.1px;width:52px;height:25.149999999999977px;justify-content:flex-end;text-align:right;padding:0 4px;font-size:9px;color:#5566bb;">0</div>
<div class="c" style="left:742px;top:373.1px;width:45px;height:25.149999999999977px;justify-content:flex-end;text-align:right;padding:0 4px;font-size:9px;color:#555;">0</div>
<div class="c" style="left:787px;top:373.1px;width:44px;height:25.149999999999977px;justify-content:flex-end;text-align:right;padding:0 3px;font-size:9px;color:#dd3344;">0</div>
<div class="c" style="left:831px;top:373.1px;width:47px;height:25.149999999999977px;justify-content:flex-end;text-align:right;padding:0 4px;font-size:9px;color:#555;">0</div>
<div class="c" style="left:878px;top:373.1px;width:46px;height:25.149999999999977px;justify-content:flex-end;text-align:right;padding:0 4px;font-size:9px;color:#555;">0</div>
<div class="c" style="left:924px;top:373.1px;width:46px;height:25.149999999999977px;justify-content:flex-end;text-align:right;padding:0 4px;font-size:9px;color:#555;">0.0</div>
<div class="c" style="left:970px;top:373.1px;width:46px;height:25.149999999999977px;justify-content:flex-end;text-align:right;padding:0 4px;font-size:9px;color:#5566bb;">0</div>
<div style="position:absolute;left:84px;top:406px;width:9px;height:9.5px;background:#1b84e3;border-radius:0.5px"><div style="position:absolute;left:1.6px;top:3.8px;width:5.8px;height:1.9px;background:#fff"></div><div style="position:absolute;left:3.55px;top:1.8px;width:1.9px;height:5.9px;background:#fff"></div></div>
<div class="c" style="left:104px;top:398.25px;width:76px;height:25.149999999999977px;justify-content:flex-start;text-align:left;padding:0 7px;font-size:9px;color:#3d3d3d;">Trakzee comp</div>
<div class="c" style="left:180px;top:398.25px;width:76px;height:25.149999999999977px;justify-content:flex-start;text-align:left;padding:0 7px;font-size:9px;color:#3d3d3d;">Trakzee comp</div>
<div class="c" style="left:256px;top:398.25px;width:61px;height:25.149999999999977px;justify-content:flex-start;text-align:left;padding:0 7px;font-size:9px;color:#3d3d3d;">Test QA</div>
<div class="c" style="left:317px;top:398.25px;width:61px;height:25.149999999999977px;justify-content:flex-end;text-align:right;padding:0 4px;font-size:9px;color:#333;font-weight:bold;">0.0</div>
<div class="c" style="left:378px;top:398.25px;width:61px;height:25.149999999999977px;justify-content:center;text-align:center;padding:0 4px;font-size:9px;color:#4a9a4a;">00:00</div>
<div class="c" style="left:439px;top:398.25px;width:61px;height:25.149999999999977px;justify-content:center;text-align:center;padding:0 4px;font-size:9px;color:#eeaa77;">00:00</div>
<div class="c" style="left:500px;top:398.25px;width:61px;height:25.149999999999977px;justify-content:center;text-align:center;padding:0 4px;font-size:9px;color:#dd4444;">00:00</div>
<div class="c" style="left:561px;top:398.25px;width:76px;height:25.149999999999977px;justify-content:center;text-align:center;padding:0 4px;font-size:9px;color:#3d3d3d;">00:00</div>
<div class="c" style="left:637px;top:398.25px;width:53px;height:25.149999999999977px;justify-content:flex-end;text-align:right;padding:0 4px;font-size:9px;color:#5566bb;">0</div>
<div class="c" style="left:690px;top:398.25px;width:52px;height:25.149999999999977px;justify-content:flex-end;text-align:right;padding:0 4px;font-size:9px;color:#5566bb;">0</div>
<div class="c" style="left:742px;top:398.25px;width:45px;height:25.149999999999977px;justify-content:flex-end;text-align:right;padding:0 4px;font-size:9px;color:#555;">0</div>
<div class="c" style="left:787px;top:398.25px;width:44px;height:25.149999999999977px;justify-content:flex-end;text-align:right;padding:0 3px;font-size:9px;color:#dd3344;">0</div>
<div class="c" style="left:831px;top:398.25px;width:47px;height:25.149999999999977px;justify-content:flex-end;text-align:right;padding:0 4px;font-size:9px;color:#555;">0</div>
<div class="c" style="left:878px;top:398.25px;width:46px;height:25.149999999999977px;justify-content:flex-end;text-align:right;padding:0 4px;font-size:9px;color:#555;">0</div>
<div class="c" style="left:924px;top:398.25px;width:46px;height:25.149999999999977px;justify-content:flex-end;text-align:right;padding:0 4px;font-size:9px;color:#555;">0.0</div>
<div class="c" style="left:970px;top:398.25px;width:46px;height:25.149999999999977px;justify-content:flex-end;text-align:right;padding:0 4px;font-size:9px;color:#5566bb;">0</div>
<svg style="left:78px;top:504px" width="20" height="20" viewBox="78 504 20 20"><path d="M83.68 515.97A4.6 4.6 0 1 1 87.60 518.98" fill="none" stroke="#333" stroke-width="1.7"/><path d="M88.80 516.38L88.80 521.78L84.40 519.18Z" fill="#333"/></svg>
<svg style="left:114px;top:508.5px" width="7" height="7" viewBox="0 0 7 7"><path d="M3.5 0v3.5" stroke="#333" stroke-width="1.2"/><path d="M0.6 3L3.5 6.2 6.4 3z" fill="#333"/></svg>
<div class="c" style="left:108px;top:514px;width:18px;height:8px;justify-content:center;font-size:6.6px;font-weight:bold;color:#3a3a3a">XLS</div>
<svg style="left:143.5px;top:508.5px" width="7" height="7" viewBox="0 0 7 7"><path d="M3.5 0v3.5" stroke="#333" stroke-width="1.2"/><path d="M0.6 3L3.5 6.2 6.4 3z" fill="#333"/></svg>
<div class="c" style="left:138px;top:514px;width:18px;height:8px;justify-content:center;font-size:6.6px;font-weight:bold;color:#3a3a3a">PDF</div>
<div style="position:absolute;left:484px;top:506px;width:88px;height:19px;background:#fff;border:1px solid #e3e3e3;box-sizing:border-box"></div>
<div style="position:absolute;left:574px;top:506px;width:88px;height:19px;background:#fff;border:1px solid #e3e3e3;box-sizing:border-box"></div>
<div class="c" style="left:577px;top:506px;height:19px;font-size:9px;color:#333">All</div>
<svg style="left:654px;top:511px" width="5" height="9" viewBox="0 0 5 9"><path d="M0.3 3.6L2.5 0.6 4.7 3.6zM0.3 5.4L2.5 8.4 4.7 5.4z" fill="#444"/></svg>
<svg style="left:665px;top:509px" width="13" height="13" viewBox="0 0 13 13"><circle cx="5.2" cy="5.2" r="4" fill="none" stroke="#333" stroke-width="1.8"/><path d="M8 8l3.8 3.8" stroke="#333" stroke-width="2.2" stroke-linecap="round"/></svg>
<div style="position:absolute;left:852px;top:505px;width:54px;height:19px;background:#fff;border:1px solid #e3e3e3;box-sizing:border-box"></div>
<svg style="left:855px;top:508px" width="17" height="12" viewBox="0 0 17 12"><path d="M0.5 1.5h15M0.5 6h15M0.5 10.5h6" stroke="#333" stroke-width="2"/></svg>
<div class="c" style="left:874px;top:505px;height:19px;font-size:9.5px;color:#333">20</div>
<svg style="left:897px;top:510px" width="5" height="9" viewBox="0 0 5 9"><path d="M0.3 3.6L2.5 0.6 4.7 3.6zM0.3 5.4L2.5 8.4 4.7 5.4z" fill="#444"/></svg>
<svg style="left:916px;top:508px" width="8" height="13" viewBox="0 0 8 13"><path d="M7 0.5L1.2 6.5 7 12.5" fill="none" stroke="#888" stroke-width="1.1"/></svg>
<div style="position:absolute;left:927px;top:505px;width:35px;height:19px;background:#fff;border:1px solid #e3e3e3;box-sizing:border-box"></div>
<div class="c" style="left:934px;top:505px;height:19px;font-size:9.5px;color:#333">1</div>
<svg style="left:951px;top:510px" width="5" height="9" viewBox="0 0 5 9"><path d="M0.3 3.6L2.5 0.6 4.7 3.6zM0.3 5.4L2.5 8.4 4.7 5.4z" fill="#444"/></svg>
<svg style="left:965px;top:508px" width="8" height="13" viewBox="0 0 8 13"><path d="M1 0.5L6.8 6.5 1 12.5" fill="none" stroke="#888" stroke-width="1.1"/></svg>
<div class="c" style="left:979px;top:505px;height:19px;font-size:9px;color:#333">1-7 (7)</div>
</body></html>
